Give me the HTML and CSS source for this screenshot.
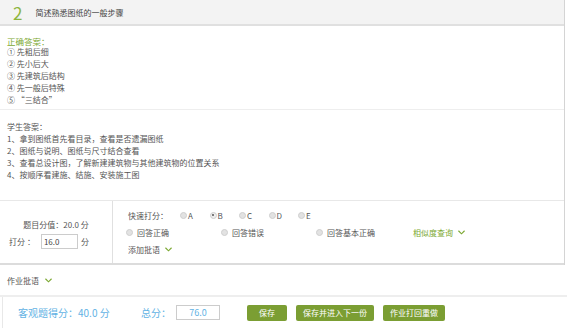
FILE: index.html
```html
<!DOCTYPE html>
<html lang="zh">
<head>
  <meta charset="UTF-8" />
  <title>作业批阅</title>
  <link rel="stylesheet" href="styles.css">
</head>
<body>
  <div class="question">
    <div class="q-head">
      <span class="q-num">2</span>
      <span class="q-title">简述熟悉图纸的一般步骤</span>
    </div>

    <div class="section answer">
      <div class="answer-title">正确答案：</div>
      <div>① 先粗后细</div>
      <div>② 先小后大</div>
      <div>③ 先建筑后结构</div>
      <div>④ 先一般后特殊</div>
      <div>⑤ “三结合”</div>
    </div>

    <div class="section student">
      <div class="student-title">学生答案：</div>
      <div>1、拿到图纸首先看目录，查看是否遗漏图纸</div>
      <div>2、图纸与说明、图纸与尺寸结合查看</div>
      <div>3、查看总设计图，了解新建建筑物与其他建筑物的位置关系</div>
      <div>4、按顺序看建施、结施、安装施工图</div>
    </div>

    <div class="score-box">
      <div class="score-left">
        <div>题目分值：20.0 分</div>
        <div class="score-input">打分 ：<input type="text" value="16.0"> 分</div>
      </div>
      <div class="score-right">
        <div class="quick">
          <span class="quick-label">快速打分：</span>
          <span class="opt"><i class="radio"></i>A</span>
          <span class="opt"><i class="radio on"></i>B</span>
          <span class="opt"><i class="radio"></i>C</span>
          <span class="opt"><i class="radio"></i>D</span>
          <span class="opt"><i class="radio"></i>E</span>
        </div>
        <div class="judge">
          <span class="opt2"><i class="radio"></i>回答正确</span>
          <span class="opt2"><i class="radio"></i>回答错误</span>
          <span class="opt2"><i class="radio"></i>回答基本正确</span>
          <span class="similar">相似度查询 <svg class="chev" viewBox="0 0 8 5"><path d="M0.5 0.5 L4 4 L7.5 0.5" /></svg></span>
        </div>
        <div class="comment">添加批语 <svg class="chev" viewBox="0 0 8 5"><path d="M0.5 0.5 L4 4 L7.5 0.5" /></svg></div>
      </div>
    </div>
  </div>

  <div class="remark">作业批语 <svg class="chev" viewBox="0 0 8 5"><path d="M0.5 0.5 L4 4 L7.5 0.5" /></svg></div>

  <div class="bottom-bar">
    <span class="objective">客观题得分：40.0 分</span>
    <span class="total">总分：<input type="text" value="76.0"></span>
    <button class="btn btn-save">保存</button>
    <button class="btn">保存并进入下一份</button>
    <button class="btn">作业打回重做</button>
  </div>
</body>
</html>
```

FILE: styles.css
```css
body {
  margin: 0;
  font-family: "Noto Sans CJK SC", "Noto Sans", sans-serif;
  font-size: 8px;
  color: #555;
  background: #fff;
}

.question {
  width: 564px;
  border-right: 1px solid #d4d4d4;
}

.q-head {
  height: 24px;
  background: #f3f3f3;
  border-bottom: 2px solid #e0e0e0;
  display: flex;
  align-items: center;
  padding-left: 13px;
}

.q-num {
  font-size: 17px;
  color: #8db53e;
  line-height: 1;
  margin-right: 13px;
}

.q-title {
  color: #444;
}

.section {
  padding: 0 7px;
  line-height: 12px;
}

.answer {
  padding-top: 10px;
  padding-bottom: 3px;
  border-bottom: 1px solid #eee;
}

.answer-title {
  color: #7ca832;
  font-size: 8.5px;
  line-height: 10px;
}

.student {
  padding-top: 10px;
  height: 80px;
}

.student-title {
  line-height: 13px;
}

.score-box {
  display: flex;
  border-top: 1px solid #e8e8e8;
  border-bottom: 2px solid #dcdcdc;
  height: 62px;
}

.score-left {
  width: 112px;
  border-right: 1px solid #e0e0e0;
  display: flex;
  flex-direction: column;
  align-items: center;
  justify-content: center;
  gap: 4px;
  padding-top: 4px;
}

.score-input {
  display: flex;
  align-items: center;
  margin-left: -14px;
}

.score-input input {
  width: 31px;
  height: 13px;
  border: 1px solid #ccc;
  font-family: inherit;
  font-size: 8px;
  padding: 0 2px;
  margin: 0 3px 0 6px;
  color: #444;
}

.score-right {
  padding: 8px 0 0 15px;
  display: flex;
  flex-direction: column;
  gap: 5px;
}

.quick, .judge, .comment {
  display: flex;
  align-items: center;
  height: 12px;
}

.quick-label {
  width: 52px;
}

.opt {
  width: 29.5px;
  display: flex;
  align-items: center;
}

.opt2 {
  width: 95px;
  display: flex;
  align-items: center;
  margin-left: -2px;
  margin-right: 2px;
}

.radio {
  display: inline-block;
  width: 7px;
  height: 7px;
  border-radius: 50%;
  background: #e2e2e2;
  border: 1px solid #cfcfcf;
  margin-right: 1px;
  box-sizing: border-box;
  position: relative;
}

.opt2 .radio {
  margin-right: 4px;
}

.radio.on {
  background: #eee;
}

.radio.on::after {
  content: "";
  position: absolute;
  left: 1.5px;
  top: 1.5px;
  width: 2px;
  height: 2px;
  border-radius: 50%;
  background: #555;
}

.similar {
  color: #7ca832;
  display: flex;
  align-items: center;
  gap: 2px;
}

.chev {
  width: 7px;
  height: 5px;
  fill: none;
  stroke: #7ca832;
  stroke-width: 1.3;
  margin-left: 3px;
}

.comment .chev {
  margin-left: 5px;
}

.remark {
  height: 30px;
  display: flex;
  align-items: center;
  padding-left: 7px;
  border-bottom: 2px solid #eee;
}

.remark .chev {
  margin-left: 6px;
}

.bottom-bar {
  display: flex;
  align-items: center;
  height: 31px;
  border-left: 1px solid #e8e8e8;
  margin-left: 2px;
  padding-left: 15px;
}

.objective {
  color: #62b2e4;
  font-size: 10px;
  width: 123px;
}

.total {
  color: #62b2e4;
  font-size: 10px;
  display: flex;
  align-items: center;
  width: 106px;
}

.total input {
  width: 44px;
  height: 15px;
  box-sizing: border-box;
  border: 1px solid #ccc;
  font-family: inherit;
  font-size: 9px;
  text-align: center;
  color: #62b2e4;
  margin-left: 5px;
  padding: 0;
}

.btn {
  height: 16px;
  background: #7b9e33;
  color: #fff;
  border: none;
  border-radius: 2px;
  font-family: inherit;
  font-size: 8px;
  padding: 0 7px;
  margin-right: 9px;
  cursor: pointer;
}

.btn-save {
  padding: 0 12px;
}
```
